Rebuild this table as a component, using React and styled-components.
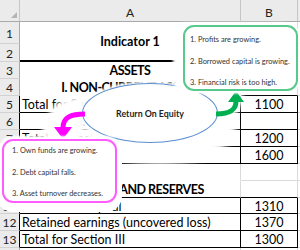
import React from 'react';
import styled, { createGlobalStyle } from 'styled-components';

const GlobalStyle = createGlobalStyle`
  html, body {
    margin: 0;
    padding: 0;
    background: #fff;
  }
  body {
    width: 300px;
    height: 250px;
    overflow: hidden;
    font-family: Lato, "Liberation Sans", sans-serif;
  }
`;

const rows = [
  { n: 1, h: 22, a: 'Indicator 1', bold: true, center: true, span: 2, under: 2, plain: true },
  { n: 2, h: 18, skipA: true },
  { n: 3, a: 'ASSETS', bold: true, caps: true, center: true, plain: true },
  { n: 4, a: 'I. NON-CURRENT ASSETS', bold: true, caps: true, center: true, plain: true, underB: true },
  { n: 5, a: 'Total for Section I', b: '1100', box: true },
  { n: 6, a: 'II. CURRENT ASSETS', bold: true, caps: true, center: true, box: true },
  { n: 7, a: 'Total for Section II', b: '1200', box: true },
  { n: 8, a: 'BALANCE', bold: true, b: '1600', box: true },
  { n: 9, plain: true },
  { n: 10, a: 'III. CAPITAL AND RESERVES', bold: true, caps: true, center: true, plain: true, under: 1, underB: true },
  { n: 11, h: 16, a: 'Authorized capital', b: '1310', box: true },
  { n: 12, a: 'Retained earnings (uncovered loss)', b: '1370', box: true },
  { n: 13, a: 'Total for Section III', b: '1300', box: true },
  { n: 14, hideNumber: true },
];

const Canvas = styled.div`
  position: relative;
  width: 300px;
  height: 250px;
  overflow: hidden;
  background: #fff;
`;

const Sheet = styled.div`
  display: grid;
  grid-template-columns: 20px 221px 57px 1fr;
  grid-template-rows: 22px ${(p) => p.$rows};
  width: 300px;
  font-size: 12.5px;
  color: #000;
`;

const Corner = styled.div`
  display: flex;
  align-items: flex-end;
  justify-content: flex-end;
  padding: 0 2px 3px 0;
  background: #ebebeb;
  border-right: 1px solid #c6c6c6;
  border-bottom: 1px solid #a9a9a9;
`;

const Triangle = styled.span`
  width: 0;
  height: 0;
  border-left: 6px solid transparent;
  border-bottom: 6px solid #b4b4b4;
`;

const ColHead = styled.div`
  display: flex;
  align-items: flex-end;
  justify-content: center;
  background: #ebebeb;
  border-right: 1px solid #c6c6c6;
  border-bottom: 1px solid #a9a9a9;
  color: #222;
  font-size: 12px;
  line-height: 14px;
  padding-bottom: 1px;
`;

const RowHead = styled.div`
  display: flex;
  align-items: center;
  justify-content: center;
  background: #ebebeb;
  border-right: 1px solid ${(p) => (p.$edge ? '#000' : '#a9a9a9')};
  border-bottom: 1px solid #d2d2d2;
  color: #222;
  font-size: 12px;
  padding-top: 1px;
`;

const line = (p) => (p.$box ? '#000' : p.$plain ? '#fff' : '#dadada');

const Cell = styled.div`
  display: flex;
  align-items: center;
  justify-content: ${(p) => (p.$center ? 'center' : 'flex-start')};
  grid-row: ${(p) => (p.$span ? `span ${p.$span}` : 'auto')};
  padding: 1px 2px 0;
  border-right: 1px solid ${(p) => (p.$box ? '#000' : '#dadada')};
  border-bottom: ${(p) => (p.$under ? `${p.$under}px solid #000` : `1px solid ${line(p)}`)};
  font-weight: ${(p) => (p.$bold ? 700 : 400)};
  letter-spacing: ${(p) => (p.$caps ? '-0.5px' : 'normal')};
  white-space: nowrap;
  overflow: hidden;
  min-width: 0;
`;

const Bubble = styled.div`
  position: absolute;
  z-index: 2;
  left: 82px;
  top: 83px;
  width: 136px;
  height: 60px;
  box-sizing: border-box;
  display: flex;
  align-items: center;
  justify-content: center;
  border: 1px solid #5b8fd0;
  border-radius: 50%;
  background: #fff;
  box-shadow: 0 0 3px 2px #fff, 10px 14px 6px 8px #fff;
  color: #1e1e1e;
  font-size: 8.8px;
  font-weight: 700;
`;

const Note = styled.div`
  position: absolute;
  z-index: 4;
  left: ${(p) => p.$x}px;
  top: ${(p) => p.$y}px;
  width: 115px;
  height: ${(p) => p.$h}px;
  box-sizing: border-box;
  display: flex;
  flex-direction: column;
  gap: 12.5px;
  padding: ${(p) => p.$pad}px 0 0 ${(p) => p.$indent}px;
  border: 2px solid ${(p) => p.$tone};
  border-radius: 11px;
  background: #fff;
  box-shadow: ${(p) => p.$halo};
  color: #333;
  font-size: 7.4px;
  line-height: 9px;
  white-space: nowrap;
`;

const Layer = styled.svg`
  position: absolute;
  left: 0;
  top: 0;
  z-index: ${(p) => p.$z};
  pointer-events: none;
`;

const pink = 'M85 114 C71 114 63 117 63 128';
const green = 'M216 114 C230 114 236 110 236 101';

function Halo() {
  return (
    <Layer $z={1} width="300" height="250" viewBox="0 0 300 250">
      <defs>
        <filter id="soft" x="-50%" y="-50%" width="200%" height="200%">
          <feGaussianBlur stdDeviation="2" />
        </filter>
      </defs>
      <g filter="url(#soft)" stroke="#fff" fill="none" strokeLinejoin="round">
        <path d={pink} strokeWidth="34" />
        <polygon points="54,128 72,128 63,139" fill="#fff" strokeWidth="24" />
        <path d={green} strokeWidth="10" />
        <polygon points="228,101 244,101 236,91" fill="#fff" strokeWidth="4" />
      </g>
    </Layer>
  );
}

function Arrows() {
  return (
    <Layer $z={3} width="300" height="250" viewBox="0 0 300 250">
      <path d={pink} stroke="#ff00ff" strokeWidth="5" fill="none" />
      <polygon points="54,127 72,127 63,139" fill="#ff00ff" />
      <path d={green} stroke="#00b050" strokeWidth="5" fill="none" />
      <polygon points="228,102 244,102 236,91" fill="#00b050" />
    </Layer>
  );
}

export default function App() {
  const heights = rows.map((r) => `${r.h || 17}px`).join(' ');

  return (
    <Canvas>
      <GlobalStyle />
      <Sheet $rows={heights}>
        <Corner><Triangle /></Corner>
        <ColHead>A</ColHead>
        <ColHead>B</ColHead>
        <ColHead />
        {rows.map((r) => (
          <React.Fragment key={r.n}>
            <RowHead $edge={r.box}>{r.hideNumber ? null : r.n}</RowHead>
            {!r.skipA && (
              <Cell
                $span={r.span}
                $box={r.box}
                $plain={r.plain}
                $under={r.under}
                $bold={r.bold}
                $caps={r.caps}
                $center={r.center}
              >
                {r.a}
              </Cell>
            )}
            <Cell $center $box={r.box} $under={r.underB ? 1 : undefined}>
              {r.b}
            </Cell>
            <Cell />
          </React.Fragment>
        ))}
      </Sheet>

      <Halo />
      <Bubble>Return On Equity</Bubble>
      <Arrows />

      <Note
        $x={183}
        $y={25}
        $h={66}
        $pad={8}
        $indent={5}
        $tone="#57c98a"
        $halo="0 0 2px 2px #fff, -8px 0 3px 2px #fff"
      >
        <span>1. Profits are growing.</span>
        <span>2. Borrowed capital is growing.</span>
        <span>3. Financial risk is too high.</span>
      </Note>
      <Note
        $x={2}
        $y={139}
        $h={64}
        $pad={5}
        $indent={8}
        $tone="#ff5cff"
        $halo="0 0 2px 3px #fff, 0 4px 0 5px #fff"
      >
        <span>1. Own funds are growing.</span>
        <span>2. Debt capital falls.</span>
        <span>3. Asset turnover decreases.</span>
      </Note>
    </Canvas>
  );
}
